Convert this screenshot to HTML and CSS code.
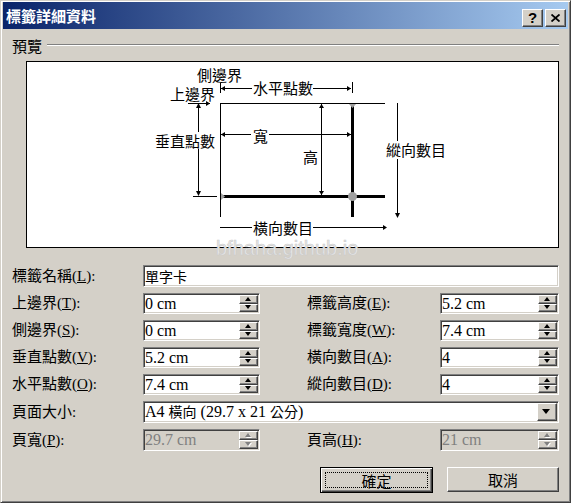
FILE: index.html
```html
<!DOCTYPE html>
<html lang="zh-Hant">
<head>
<meta charset="utf-8">
<title>標籤詳細資料</title>
<link rel="stylesheet" href="styles.css">
</head>
<body>
<div class="window">
  <div class="titlebar">
    <span class="title">標籤詳細資料</span>
    <div class="tb-buttons">
      <div class="tb-btn help">?</div>
      <div class="tb-btn close"><svg width="9" height="8" viewBox="0 0 9 8"><path d="M0.5 0.5 L8.5 7.5 M8.5 0.5 L0.5 7.5" stroke="#000" stroke-width="1.8" fill="none"/></svg></div>
    </div>
  </div>
  <div class="content">
    <div class="group-head"><span class="group-label">預覽</span><span class="etch"></span></div>
    <div class="preview">
      <svg class="diagram" width="531" height="185" viewBox="27 62 531 185">
        <g stroke="#000" stroke-width="1" fill="none" shape-rendering="crispEdges">
          <line x1="220.5" y1="83" x2="220.5" y2="93"/>
          <line x1="221" y1="88.5" x2="252" y2="88.5"/>
          <line x1="313" y1="88.5" x2="351" y2="88.5"/>
          <line x1="352.5" y1="82" x2="352.5" y2="93"/>
          <line x1="220" y1="103.5" x2="385" y2="103.5"/>
          <line x1="188" y1="103.5" x2="210" y2="103.5"/>
          <line x1="220.5" y1="103" x2="220.5" y2="217"/>
          <line x1="198.5" y1="104" x2="198.5" y2="132"/>
          <line x1="198.5" y1="149" x2="198.5" y2="195"/>
          <line x1="193" y1="196.5" x2="217" y2="196.5"/>
          <line x1="221" y1="134.5" x2="251" y2="134.5"/>
          <line x1="269" y1="134.5" x2="351" y2="134.5"/>
          <line x1="321.5" y1="104" x2="321.5" y2="195"/>
          <line x1="397.5" y1="103" x2="397.5" y2="141"/>
          <line x1="397.5" y1="159" x2="397.5" y2="217"/>
          <line x1="220" y1="227.5" x2="252" y2="227.5"/>
          <line x1="313" y1="227.5" x2="386" y2="227.5"/>
        </g>
        <g stroke="#000" stroke-width="3" shape-rendering="crispEdges">
          <line x1="352" y1="103" x2="352" y2="217"/>
          <line x1="220" y1="196" x2="385" y2="196"/>
        </g>
        <g fill="#000">
          <polygon points="221,88.5 225,86 225,91"/>
          <polygon points="351,88.5 347,86 347,91"/>
          <polygon points="210,103.5 206,101 206,106"/>
          <polygon points="198.5,103 196,108 201,108"/>
          <polygon points="198.5,196 196,191 201,191"/>
          <polygon points="221,134.5 225,132 225,137"/>
          <polygon points="351,134.5 347,132 347,137"/>
          <polygon points="321.5,104 319,108 324,108"/>
          <polygon points="321.5,195 319,191 324,191"/>
          <polygon points="397.5,218 395,213 400,213"/>
          <polygon points="387,227.5 383,225 383,230"/>
        </g>
        <g fill="#a0a0a0">
          <polygon points="349,104 356,104 352.5,108"/>
          <polygon points="221,193 221,200 225,196.5"/>
          <circle cx="352.5" cy="196.5" r="4.5"/>
        </g>
        <g class="dtext" font-size="15" fill="#000">
          <text x="197" y="81">側邊界</text>
          <text x="170" y="100">上邊界</text>
          <text x="253" y="94">水平點數</text>
          <text x="253" y="142">寬</text>
          <text x="155" y="147">垂直點數</text>
          <text x="303" y="163">高</text>
          <text x="386" y="156">縱向數目</text>
          <text x="253" y="234">橫向數目</text>
        </g>
      </svg>
    </div>

    <div class="form">
      <div class="lbl">標籤名稱(<u>L</u>):</div>
      <div class="field wide"><span class="val cjk">單字卡</span></div>

      <div class="lbl">上邊界(<u>T</u>):</div>
      <div class="field"><span class="val">0 cm</span><span class="spin"><i class="up"></i><i class="dn"></i></span></div>
      <div class="lbl r">標籤高度(<u>E</u>):</div>
      <div class="field"><span class="val">5.2 cm</span><span class="spin"><i class="up"></i><i class="dn"></i></span></div>

      <div class="lbl">側邊界(<u>S</u>):</div>
      <div class="field"><span class="val">0 cm</span><span class="spin"><i class="up"></i><i class="dn"></i></span></div>
      <div class="lbl r">標籤寬度(<u>W</u>):</div>
      <div class="field"><span class="val">7.4 cm</span><span class="spin"><i class="up"></i><i class="dn"></i></span></div>

      <div class="lbl">垂直點數(<u>V</u>):</div>
      <div class="field"><span class="val">5.2 cm</span><span class="spin"><i class="up"></i><i class="dn"></i></span></div>
      <div class="lbl r">橫向數目(<u>A</u>):</div>
      <div class="field"><span class="val">4</span><span class="spin"><i class="up"></i><i class="dn"></i></span></div>

      <div class="lbl">水平點數(<u>O</u>):</div>
      <div class="field"><span class="val">7.4 cm</span><span class="spin"><i class="up"></i><i class="dn"></i></span></div>
      <div class="lbl r">縱向數目(<u>D</u>):</div>
      <div class="field"><span class="val">4</span><span class="spin"><i class="up"></i><i class="dn"></i></span></div>

      <div class="lbl">頁面大小:</div>
      <div class="field wide combo"><span class="val">A4 <span class="cjk">橫向</span> (29.7 x 21 <span class="cjk">公分</span>)</span><span class="drop"><i></i></span></div>

      <div class="lbl">頁寬(<u>P</u>):</div>
      <div class="field disabled"><span class="val">29.7 cm</span><span class="spin"><i class="up"></i><i class="dn"></i></span></div>
      <div class="lbl r">頁高(<u>H</u>):</div>
      <div class="field disabled"><span class="val">21 cm</span><span class="spin"><i class="up"></i><i class="dn"></i></span></div>
    </div>

    <div class="actions">
      <div class="btn default"><span>確定</span></div>
      <div class="btn"><span>取消</span></div>
    </div>
  </div>
  <div class="watermark">bfhaha.github.io</div>
</div>
</body>
</html>
```

FILE: styles.css
```css
* { box-sizing: border-box; }
html, body { margin: 0; padding: 0; }
body {
  width: 571px;
  height: 503px;
  overflow: hidden;
  background: #D4D0C8;
  font-family: "Liberation Serif", "Noto Sans CJK TC", serif;
  font-size: 15px;
  color: #000;
}
.window {
  position: relative;
  width: 571px;
  height: 503px;
  background: #D4D0C8;
  border: 1px solid;
  border-color: #D4D0C8 #404040 #404040 #D4D0C8;
  box-shadow: inset 1px 1px #fff, inset -1px -1px #808080;
  padding: 1px 2px 2px 2px;
  display: flex;
  flex-direction: column;
}
.titlebar {
  height: 27px;
  flex: none;
  display: flex;
  align-items: center;
  justify-content: space-between;
  padding-left: 3px;
  padding-right: 2px;
  background: linear-gradient(to right, #0A246A, #A6CAF0);
}
.title {
  color: #fff;
  font-family: "Noto Sans CJK TC", sans-serif;
  font-weight: bold;
  font-size: 15px;
  line-height: 1;
}
.tb-buttons { display: flex; gap: 2px; margin-top: 4px; }
.tb-btn {
  width: 21px;
  height: 18px;
  background: #D4D0C8;
  border: 1px solid;
  border-color: #fff #404040 #404040 #fff;
  box-shadow: inset -1px -1px #808080;
  display: flex;
  align-items: center;
  justify-content: center;
}
.tb-btn.help {
  font-family: "Liberation Sans", sans-serif;
  font-weight: bold;
  font-size: 15px;
  line-height: 1;
}
.content {
  flex: 1;
  display: flex;
  flex-direction: column;
  padding: 0 9px;
}
.group-head {
  margin-top: 8px;
  height: 16px;
  display: flex;
  align-items: center;
}
.group-label {
  font-family: "Noto Sans CJK TC", sans-serif;
  font-size: 15px;
  line-height: 1;
}
.etch {
  flex: 1;
  margin-left: 5px;
  height: 2px;
  border-top: 1px solid #808080;
  border-bottom: 1px solid #fff;
}
.preview {
  margin: 8px 0 0 14px;
  width: 533px;
  height: 187px;
  border: 1px solid #000;
  background: #fff;
}
.diagram { display: block; }
.dtext { font-family: "Noto Sans CJK TC", sans-serif; }

.form {
  margin-top: 17px;
  display: grid;
  grid-template-columns: 131px 117px 47px 133px 119px;
  grid-template-rows: 22px 21px 21px 21px 21px 22px 22px;
  row-gap: 6px;
  align-items: center;
}
.lbl {
  grid-column: 1;
  white-space: nowrap;
  font-size: 15px;
  line-height: 1;
}
.lbl.r { grid-column: 4; }
.lbl u { text-decoration-thickness: 1px; text-underline-offset: 1px; }
.field {
  height: 100%;
  display: flex;
  align-items: center;
  background: #fff;
  border: 1px solid;
  border-color: #808080 #fff #fff #808080;
  box-shadow: inset 1px 1px #404040, inset -1px -1px #D4D0C8;
  padding: 1px;
  font-size: 16px;
  line-height: 1;
  overflow: hidden;
}
.field.wide { grid-column: 2 / 6; }
.val { flex: 1; white-space: nowrap; padding-left: 0; }
.cjk { font-family: "Noto Sans CJK TC", sans-serif; font-size: 14px; }
.spin {
  width: 19px;
  align-self: stretch;
  display: flex;
  flex-direction: column;
  flex: none;
}
.spin i, .drop {
  position: relative;
  flex: 1;
  background: #D4D0C8;
  border: 1px solid;
  border-color: #fff #404040 #404040 #fff;
  box-shadow: inset -1px -1px #808080;
}
.spin i::after {
  content: "";
  position: absolute;
  left: 50%;
  top: 50%;
  margin-left: -4px;
  width: 0;
  height: 0;
  border-left: 3.5px solid transparent;
  border-right: 3.5px solid transparent;
}
.spin i.up::after { border-bottom: 4px solid #000; margin-top: -2.5px; }
.spin i.dn::after { border-top: 4px solid #000; margin-top: -2.5px; }
.drop {
  width: 20px;
  flex: none;
  align-self: stretch;
}
.drop i {
  position: absolute;
  left: 50%;
  top: 50%;
  margin-left: -5px;
  margin-top: -3px;
  width: 0;
  height: 0;
  border-left: 4.5px solid transparent;
  border-right: 4.5px solid transparent;
  border-top: 5px solid #000;
}
.field.disabled { background: #D4D0C8; color: #808080; }
.field.disabled .spin i.up::after { border-bottom-color: #808080; filter: drop-shadow(1px 1px 0 #fff); }
.field.disabled .spin i.dn::after { border-top-color: #808080; filter: drop-shadow(1px 1px 0 #fff); }

.actions {
  margin-top: 16px;
  display: flex;
  justify-content: flex-end;
  gap: 14px;
}
.btn {
  position: relative;
  width: 112px;
  height: 25px;
  background: #D4D0C8;
  border: 1px solid;
  border-color: #fff #404040 #404040 #fff;
  box-shadow: inset -1px -1px #808080;
  display: flex;
  align-items: center;
  justify-content: center;
  font-family: "Noto Sans CJK TC", sans-serif;
  font-size: 15px;
  line-height: 1;
}
.btn.default {
  width: 113px;
  height: 26px;
  border: 1px solid #000;
  box-shadow: inset 1px 1px #fff, inset -1px -1px #404040, inset -2px -2px #808080;
}
.btn.default::after {
  content: "";
  position: absolute;
  inset: 4px;
  border: 1px dotted #000;
}
.watermark {
  position: absolute;
  left: 215px;
  top: 237px;
  font-family: "Liberation Sans", sans-serif;
  font-size: 20px;
  color: #e6e6e6;
  -webkit-text-stroke: 0.6px rgba(200, 200, 200, 0.9);
  line-height: 1;
  pointer-events: none;
}
```
